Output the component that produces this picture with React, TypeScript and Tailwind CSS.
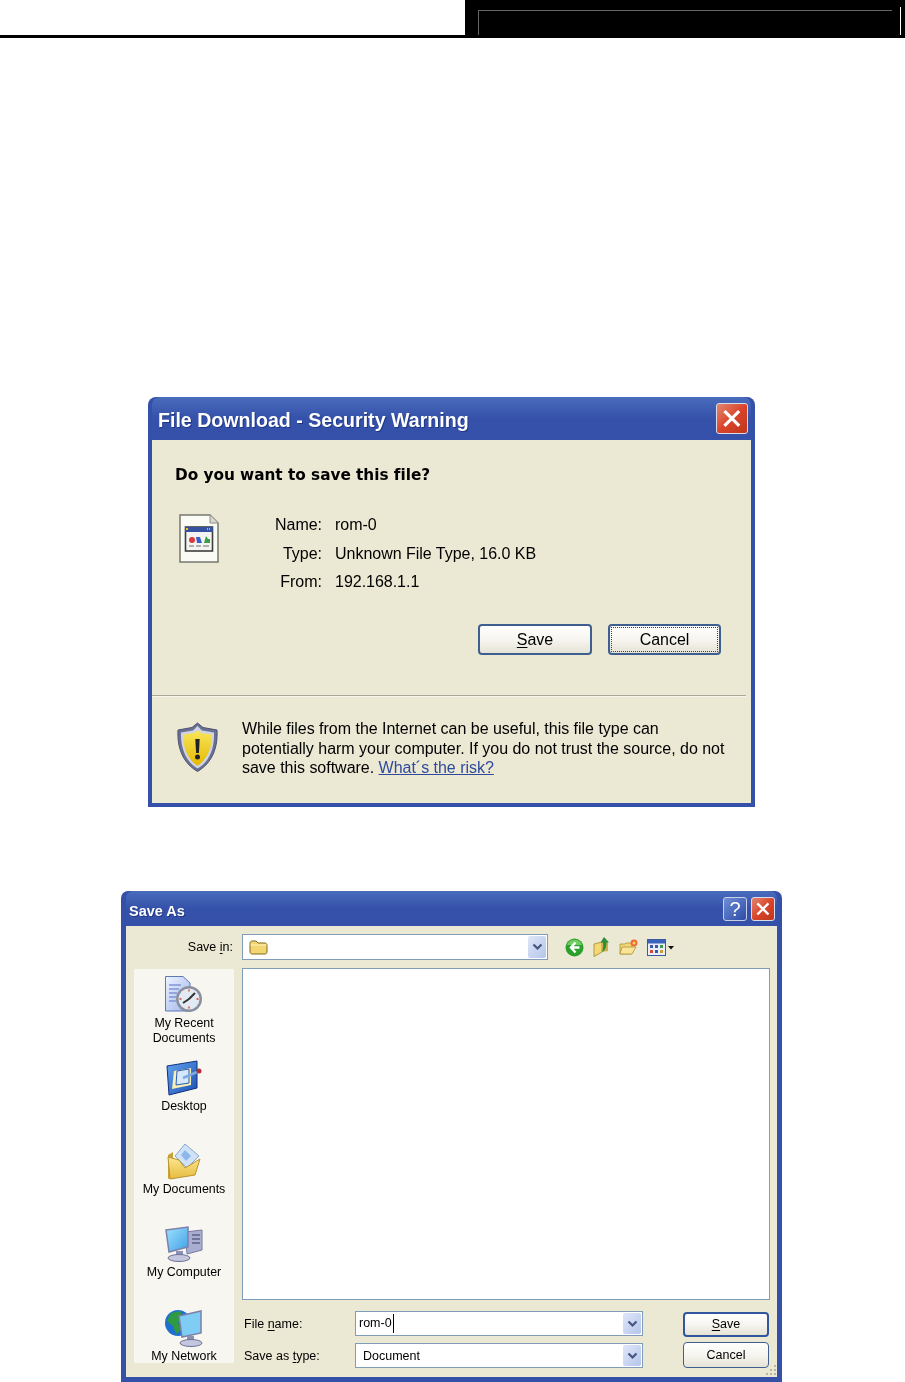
import * as React from 'react';

const ui = 'font-["Liberation_Sans",Arial,sans-serif]';

function Combo({ width, children }: { width: string; children?: React.ReactNode }) {
    return (
        <div className={`flex h-full items-center justify-between border border-[#7f9db9] bg-white pl-[3px] pr-[1px] ${width}`}>
            <div className="flex min-w-0 items-center">{children}</div>
            <div className="flex h-[calc(100%-2px)] w-[18px] items-center justify-center rounded-[2px] bg-gradient-to-br from-[#dfe7f8] to-[#b5c5ea]">
                <svg width="11" height="8" viewBox="0 0 11 8" fill="none" stroke="#44567f" strokeWidth="2.2">
                    <path d="M1.5 1.5 5.5 5.5 9.5 1.5" />
                </svg>
            </div>
        </div>
    );
}

function XpButton({ label, hot, focused, className }: { label: string; hot?: string; focused?: boolean; className: string }) {
    const rest = hot ? label.slice(1) : label;
    return (
        <div
            className={`flex items-center justify-center rounded-[4px] border-2 border-[#3f5f91] bg-gradient-to-b from-white via-[#f6f5f0] to-[#e6e3d6] text-black ${className}`}
        >
            <span className={focused ? 'flex h-[calc(100%-2px)] w-[calc(100%-2px)] items-center justify-center border border-dotted border-[#30407a]' : ''}>
                {hot && <span className="underline underline-offset-2">{hot}</span>}
                {rest}
            </span>
        </div>
    );
}

function CloseBox({ size }: { size: string }) {
    return (
        <div className={`flex items-center justify-center rounded-[3px] border border-[#d8dcea] bg-gradient-to-br from-[#e2856d] via-[#d9442a] to-[#c0361c] ${size}`}>
            <svg viewBox="0 0 20 20" className="h-[72%] w-[72%]" stroke="white" strokeWidth="3" strokeLinecap="square">
                <path d="M4 4 16 16M16 4 4 16" />
            </svg>
        </div>
    );
}

function FileTypeIcon() {
    return (
        <svg width="40" height="49" viewBox="0 0 40 49">
            <path d="M1 1H31L39 9V48H1Z" fill="#fbfbf6" stroke="#77786f" strokeWidth="1.500" />
            <path d="M31 1V9H39" fill="#d8d8d0" stroke="#8e8e86" />
            <rect x="6.500" y="13" width="27" height="24" fill="#f4f4f2" stroke="#3e3e3a" strokeWidth="1.600" />
            <rect x="6" y="13" width="28" height="5" fill="#34529f" />
            <rect x="7" y="14" width="2" height="2" fill="#f0c030" />
            <path d="M28 15h4" stroke="#c8d4f0" strokeWidth="1.500" strokeDasharray="1 1" />
            <circle cx="13" cy="26" r="3" fill="#d93a3a" />
            <path d="M17 23h4l2 6h-5Z" fill="#3a60c8" />
            <path d="M25 29l2-7 2 3 2 0v4Z" fill="#3aa048" />
            <path d="M10 32h5M17 32h5M24 32h6" stroke="#999" strokeWidth="1.600" />
        </svg>
    );
}

function ShieldIcon() {
    return (
        <svg width="41" height="50" viewBox="0 0 41 50">
            <defs>
                <linearGradient id="shield-fill" x1="0" y1="0" x2="0" y2="1">
                    <stop offset="0" stopColor="#f7e65a" />
                    <stop offset="1" stopColor="#e6b800" />
                </linearGradient>
            </defs>
            <path d="M20.5 1 26 5.5 40 8c1 18-5 33-19.500 41.500C6 41 0 26 1 8L15 5.500Z" fill="#6a7092" stroke="#4c5270" />
            <path d="M20.500 4 25 8.500 37 10.500c.5 15-4 29-16.500 36C9 39.500 3.500 26 4 10.500L16 8.500Z" fill="#cfd4e6" />
            <path d="M20.500 8 24 11 35 12.500C35 26 30.500 37 20.500 44 10.500 37 6 26 6 12.500L17 11Z" fill="url(#shield-fill)" />
            <path d="M18.300 17h4.400l-.8 14h-2.800Z" fill="#222" />
            <circle cx="20.500" cy="35" r="2.500" fill="#222" />
        </svg>
    );
}

function FolderIcon() {
    return (
        <svg width="19" height="15" viewBox="0 0 19 15">
            <path d="M1 3.500C1 2 2 1 3 1h4l2 2h7c1 0 2 1 2 2v7c0 1-1 2-2 2H3c-1 0-2-1-2-2Z" fill="#f3d672" stroke="#7f6a1f" />
            <path d="M1.500 5h16" stroke="#fff3b8" />
        </svg>
    );
}

function BackIcon() {
    return (
        <svg width="19" height="19" viewBox="0 0 19 19">
            <circle cx="9.500" cy="9.500" r="9" fill="#2ca02c" />
            <path d="M2 7a8 8 0 0 1 15 0Z" fill="#6fce5f" />
            <path d="M10.500 4.500 6 9.500l4.500 5M6.500 9.500H14.500" fill="none" stroke="white" strokeWidth="2.400" />
        </svg>
    );
}

function UpFolderIcon() {
    return (
        <svg width="17" height="20" viewBox="0 0 17 20">
            <path d="M1 7 9 5v10l-8 4.500Z" fill="#f3d874" stroke="#a08a30" strokeWidth=".8" />
            <path d="M9 5h6v9l-6 1Z" fill="#cdb04a" />
            <path d="M11 0 16 5.500h-2.500C13.500 10 12.500 13 9 15c1-3 1.500-6 1-9.500H7.500Z" fill="#2c8f3a" />
        </svg>
    );
}

function NewFolderIcon() {
    return (
        <svg width="19" height="16" viewBox="0 0 19 16">
            <path d="M1 5h5l1-1h6v3l-1 8H1Z" fill="#f2d775" stroke="#ab9238" strokeWidth=".8" />
            <path d="M3 8h14l-4 7H1Z" fill="#f8e596" stroke="#ab9238" strokeWidth=".8" />
            <circle cx="15" cy="4" r="3.400" fill="#ee6a2c" />
            <circle cx="15" cy="4" r="1.500" fill="#ffd27a" />
        </svg>
    );
}

function ViewsIcon() {
    return (
        <svg width="28" height="17" viewBox="0 0 28 17">
            <rect x=".5" y=".5" width="18" height="16" fill="#e9eefa" stroke="#3a5aa8" />
            <rect x="1" y="1" width="17" height="3.500" fill="#3a64b8" />
            <path d="M3 6h3v3H3ZM8 6h3v3H8Z" fill="#3a5aa8" />
            <path d="M13 6h3v3h-3Z" fill="#3f9a50" />
            <path d="M3 11h3v3H3Z" fill="#d64a3a" />
            <path d="M8 11h3v3H8Z" fill="#3a5aa8" />
            <path d="M13 11h3v3h-3Z" fill="#c9a030" />
            <path d="M21 7h6l-3 3.500Z" fill="#111" />
        </svg>
    );
}

function RecentIcon() {
    return (
        <svg width="38" height="37" viewBox="0 0 38 37">
            <defs>
                <linearGradient id="recent-page" x1="0" y1="0" x2="1" y2="1">
                    <stop offset="0" stopColor="#eef3ff" />
                    <stop offset="1" stopColor="#9db4ec" />
                </linearGradient>
            </defs>
            <path d="M.5.5H18L25 7V35H.5Z" fill="url(#recent-page)" stroke="#6078b8" />
            <path d="M4 9h12M4 13h10M4 17h8M4 21h7M4 25h7" stroke="#7f96d2" strokeWidth="1.500" />
            <circle cx="24" cy="23" r="13" fill="#8a8f9e" />
            <circle cx="24" cy="23" r="10.500" fill="#e2ebf4" />
            <path d="M24 23 30 17M24 23 18 27" stroke="#333" strokeWidth="2" />
            <path d="M24 13.500v2M24 30.500v2M14.500 23h2M31.500 23h2" stroke="#dd6a50" strokeWidth="1.800" />
        </svg>
    );
}

function DesktopIcon() {
    return (
        <svg width="36" height="36" viewBox="0 0 36 36">
            <defs>
                <linearGradient id="desk-bg" x1="0" y1="0" x2="1" y2="1">
                    <stop offset="0" stopColor="#62a4f0" />
                    <stop offset="1" stopColor="#1c4fb4" />
                </linearGradient>
            </defs>
            <path d="M1 6 31 1V28L3 35Z" fill="url(#desk-bg)" stroke="#12307a" />
            <path d="M8 11 25 8V25L6 29Z" fill="#f7efb4" />
            <path d="M11 11 23 9V23L10 25Z" fill="#d6e8fb" stroke="#2a5ab0" />
            <path d="M17 18 31 12" stroke="#7fa8e0" strokeWidth="2.500" />
            <circle cx="33" cy="11" r="2.500" fill="#b33030" />
        </svg>
    );
}

function DocsIcon() {
    return (
        <svg width="34" height="37" viewBox="0 0 34 37">
            <defs>
                <linearGradient id="docs-folder" x1="0" y1="0" x2="0" y2="1">
                    <stop offset="0" stopColor="#fbe78f" />
                    <stop offset="1" stopColor="#e6bc3e" />
                </linearGradient>
            </defs>
            <path d="M1 12 6 9V34L1 36Z" fill="#c9a437" />
            <path d="M8 13 18 1 32 13 20 25Z" fill="#cfe2f8" stroke="#8aa6d0" />
            <path d="M14 12 18 7 24 13 19 18Z" fill="#8db8ea" />
            <path d="M1 14 12 17 18 25 33 16 28 32 3 36Z" fill="url(#docs-folder)" stroke="#b89430" />
        </svg>
    );
}

function ComputerIcon() {
    return (
        <svg width="38" height="36" viewBox="0 0 38 36">
            <defs>
                <linearGradient id="pc-screen" x1="0" y1="0" x2="1" y2="1">
                    <stop offset="0" stopColor="#9fe2fb" />
                    <stop offset="1" stopColor="#3f9fe8" />
                </linearGradient>
            </defs>
            <path d="M20 6 37 4V24L22 28Z" fill="#a9add0" stroke="#777ba0" />
            <path d="M27 9h8M27 13h8M27 17h8" stroke="#5d6186" strokeWidth="1.500" />
            <path d="M1 4 23 1V21L4 26Z" fill="url(#pc-screen)" stroke="#7c80a8" strokeWidth="1.500" />
            <path d="M11 25h7v5h-7Z" fill="#8c90b6" />
            <ellipse cx="14" cy="32" rx="11" ry="3.500" fill="#c4c6de" stroke="#6d7098" />
        </svg>
    );
}

function NetworkIcon() {
    return (
        <svg width="38" height="38" viewBox="0 0 38 38">
            <circle cx="13" cy="14" r="13" fill="#1f6fd0" />
            <path d="M6 4 15 2 19 9 13 13 16 21 11 25 8 17 2 12Z" fill="#2f9a40" />
            <path d="M14 7 36 2V24L17 28Z" fill="#7fcdf5" stroke="#7c80a8" strokeWidth="1.500" />
            <path d="M22 27h7v5h-7Z" fill="#8c90b6" />
            <ellipse cx="26" cy="34" rx="11" ry="3.500" fill="#c4c6de" stroke="#6d7098" />
        </svg>
    );
}

function Places() {
    const items = [
        { label: ['My Recent', 'Documents'], icon: <RecentIcon /> },
        { label: ['Desktop'], icon: <DesktopIcon /> },
        { label: ['My Documents'], icon: <DocsIcon /> },
        { label: ['My Computer'], icon: <ComputerIcon /> },
        { label: ['My Network'], icon: <NetworkIcon /> },
    ];
    return (
        <div className="mt-px h-[394px] w-[100px] shrink-0 overflow-hidden bg-[#f7f6f1] text-center text-[12.400px] leading-[15px] text-black">
            {items.map((item) => (
                <div key={item.label[0]} className="h-[83.250px] pt-[7px]">
                    <div className="flex h-[37px] items-center justify-center">{item.icon}</div>
                    <div className="mt-[2.500px]">
                        {item.label.map((line) => (
                            <div key={line}>{line}</div>
                        ))}
                    </div>
                </div>
            ))}
        </div>
    );
}

function SaveAs() {
    return (
        <div className="ml-[121px] mt-[84px] flex h-[491px] w-[661px] flex-col rounded-t-[7px] bg-[#3450a8] px-[5px] pb-[5px] blur-[0.4px]">
            <div className="flex h-[35px] shrink-0 items-center justify-between rounded-t-[7px] bg-gradient-to-b from-[#4a6cbc] via-[#3551aa] to-[#3450a8] pl-[3px] pr-[2px]">
                <span className="mt-[6px] text-[14.500px] font-bold text-white [text-shadow:1px_1px_0_#1f3684]">Save As</span>
                <div className="flex gap-[4px]">
                    <div className="flex h-[24px] w-[24px] items-center justify-center rounded-[3px] border border-[#c8d0e8] bg-gradient-to-br from-[#6f8fd6] to-[#2f4ba6] text-[20px] font-normal leading-none text-white">?</div>
                    <CloseBox size="h-[24px] w-[24px]" />
                </div>
            </div>
            <div className="relative flex-1 bg-[#ebe8d4] text-[12.500px] text-black">
                <div className="flex h-[34px] items-stretch pt-[8px]">
                    <div className="flex w-[107px] items-center justify-end">
                        Save&nbsp;<span className="underline underline-offset-2">i</span>n:
                    </div>
                    <div className="ml-[9px]">
                        <Combo width="w-[306px]">
                            <span className="pl-[3px]">
                                <FolderIcon />
                            </span>
                        </Combo>
                    </div>
                    <div className="ml-[17px] flex items-center gap-[9px]">
                        <BackIcon />
                        <UpFolderIcon />
                        <NewFolderIcon />
                        <ViewsIcon />
                    </div>
                </div>
                <div className="ml-[8px] mt-[8px] flex gap-[8px]">
                    <Places />
                    <div className="w-[528px]">
                        <div className="h-[332px] border border-[#7f9db9] bg-white" />
                        <div className="mt-[11px] flex">
                            <div className="w-[401px]">
                                <div className="flex h-[25px] items-stretch">
                                    <div className="flex w-[113px] items-center pl-[2px] pt-[2px]">
                                        File&nbsp;<span className="underline underline-offset-2">n</span>ame:
                                    </div>
                                    <Combo width="w-[288px]">
                                        <span className="border-r border-black pr-px">rom-0</span>
                                    </Combo>
                                </div>
                                <div className="mt-[7px] flex h-[25px] items-stretch">
                                    <div className="flex w-[113px] items-center pl-[2px] pt-px">
                                        Save as&nbsp;<span className="underline underline-offset-2">t</span>ype:
                                    </div>
                                    <Combo width="w-[288px]">
                                        <span className="pl-[4px] pt-px">Document</span>
                                    </Combo>
                                </div>
                            </div>
                            <div className="ml-[40px] flex flex-col pt-px">
                                <XpButton label="Save" hot="S" className="h-[25px] w-[86px] border-[#32579c]" />
                                <XpButton label="Cancel" className="mt-[5px] h-[26px] w-[86px] border-[#2c4a5a] !border" />
                            </div>
                        </div>
                    </div>
                </div>
                <svg className="absolute bottom-0 right-0" width="13" height="13" viewBox="0 0 13 13" fill="#b8b5a0">
                    <path d="M10 1h2v2h-2ZM6 5h2v2H6ZM10 5h2v2h-2ZM2 9h2v2H2ZM6 9h2v2H6ZM10 9h2v2h-2Z" />
                </svg>
            </div>
        </div>
    );
}

function SecurityWarning() {
    return (
        <div className="ml-[148px] mt-[359px] flex h-[410px] w-[607px] flex-col rounded-t-[8px] bg-[#3450a8] px-[4px] pb-[4px] blur-[0.4px]">
            <div className="flex h-[43px] shrink-0 items-center justify-between rounded-t-[8px] bg-gradient-to-b from-[#4a6cbc] via-[#3551aa] to-[#3450a8] pl-[6px] pr-[3px]">
                <span className="mt-[5px] text-[19.600px] font-bold text-white [text-shadow:1px_1px_0_#1f3684]">File Download - Security Warning</span>
                <CloseBox size="h-[31px] w-[32px]" />
            </div>
            <div className="flex-1 bg-[#ebe8d4] text-[16px] tracking-[-0.020px] text-black">
                <div className='pl-[23px] pt-[26px] font-["DejaVu_Sans",sans-serif] text-[15.300px] font-bold leading-[18px]'>Do you want to save this file?</div>
                <div className="mt-[22px] flex h-[118px] pl-[27px]">
                    <div className="mt-[8px]">
                        <FileTypeIcon />
                    </div>
                    <div className="grid grid-cols-[103px_auto] content-start gap-x-[13px] pt-[5px] [grid-auto-rows:28.500px]">
                        <div className="flex items-center justify-end">Name:</div>
                        <div className="flex items-center">rom-0</div>
                        <div className="flex items-center justify-end">Type:</div>
                        <div className="flex items-center">Unknown File Type, 16.0 KB</div>
                        <div className="flex items-center justify-end">From:</div>
                        <div className="flex items-center">192.168.1.1</div>
                    </div>
                </div>
                <div className="flex h-[31px] justify-end gap-[16px] pr-[30px]">
                    <XpButton label="Save" hot="S" className="w-[114px]" />
                    <XpButton label="Cancel" focused className="w-[113px]" />
                </div>
                <div className="mr-[5px] mt-[40px] h-[2px] border-b border-t-0 border-[#f7f6ee] bg-[#aca899]" />
                <div className="flex pl-[25px] pt-[22px]">
                    <div className="mt-[3px]">
                        <ShieldIcon />
                    </div>
                    <div className="ml-[24px] w-[490px] leading-[19.500px]">
                        While files from the Internet can be useful, this file type can potentially harm your computer. If you do not trust the source, do not save this software.{' '}
                        <span className="text-[#2f4a9c] underline">What´s the risk?</span>
                    </div>
                </div>
            </div>
        </div>
    );
}

export default function App() {
    return (
        <div className={`h-[1382px] w-[905px] overflow-hidden bg-white ${ui}`}>
            <div className="flex h-[38px]">
                <div className="h-[38px] w-[465px] border-b-[3px] border-black" />
                <div className="flex h-[38px] w-[440px] bg-black pl-[13px] pt-[7px]">
                    <div className="mt-[3px] h-[25px] w-[414px] border-l border-t border-[#666]" />
                    <div className="ml-[8px] h-[28px] w-px bg-white" />
                </div>
            </div>
            <SecurityWarning />
            <SaveAs />
        </div>
    );
}
